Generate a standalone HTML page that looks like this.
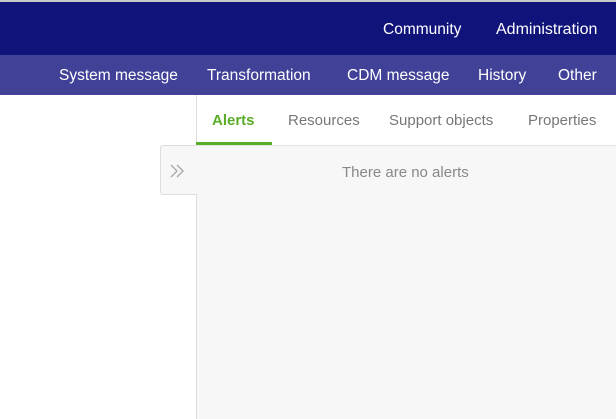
<!DOCTYPE html>
<html><head><meta charset="utf-8"><style>
*{margin:0;padding:0;box-sizing:border-box}
body{width:616px;height:419px;overflow:hidden;background:#fff;font-family:"Liberation Sans",sans-serif;position:relative}
.top{position:absolute;left:0;top:0;width:616px;height:55px;background:#10137a;border-top:2px solid #c8c8c8}
.sub{position:absolute;left:0;top:55px;width:616px;height:40px;background:#414197}
.t{position:absolute;color:#fff;font-size:15.5px;white-space:nowrap}
.tab{position:absolute;top:112px;font-size:15px;color:#777;white-space:nowrap}
.content{position:absolute;left:196px;top:145px;width:420px;height:274px;background:#f7f7f7;border-left:1px solid #ddd;border-top:1px solid #e4e4e4}
.vline{position:absolute;left:196px;top:95px;width:1px;height:50px;background:#ddd}
.tog{position:absolute;left:160px;top:145px;width:37px;height:50px;background:#f7f7f7;border:1px solid #ddd;border-right:none;border-radius:3px 0 0 3px}
</style></head><body>
<div class="top"></div>
<div class="t" style="left:383px;top:21px">Community</div>
<div class="t" style="left:496px;top:21px;font-size:16px">Administration</div>
<div class="sub"></div>
<div class="t" style="left:59px;top:67px">System message</div>
<div class="t" style="left:207px;top:67px">Transformation</div>
<div class="t" style="left:347px;top:67px">CDM message</div>
<div class="t" style="left:478px;top:67px">History</div>
<div class="t" style="left:558px;top:67px">Other</div>
<div class="vline"></div>
<div class="tab" style="left:212px;color:#5aad28;font-weight:bold">Alerts</div>
<div class="tab" style="left:288px">Resources</div>
<div class="tab" style="left:389px">Support objects</div>
<div class="tab" style="left:528px">Properties</div>
<div style="position:absolute;left:196px;top:142px;width:76px;height:3px;background:#5aad28"></div>
<div class="content"></div>
<div class="tog"><svg width="37" height="50" style="position:absolute;left:0;top:0"><path d="M10 19l6 6-6 6M16 19l6 6-6 6" fill="none" stroke="#aaa" stroke-width="1.4"/></svg></div>
<div style="position:absolute;left:342px;top:164px;font-size:15px;color:#888">There are no alerts</div>
</body></html>
